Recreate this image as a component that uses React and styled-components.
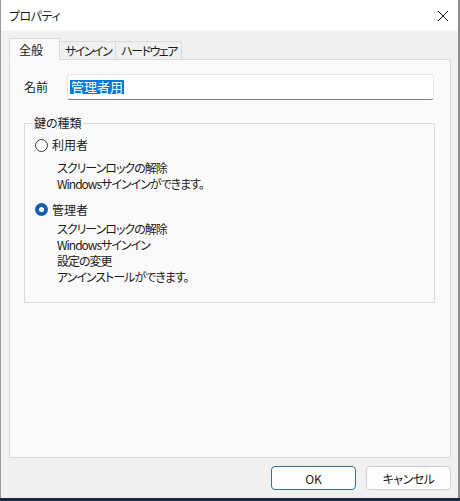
import styled, { createGlobalStyle } from 'styled-components'

const GlobalStyle = createGlobalStyle`
  body {
    margin: 0;
    background: #1d2b40;
    font-family: "Noto Sans CJK JP", "Noto Sans", sans-serif;
    font-size: 12px;
    color: #1a1a1a;
    font-feature-settings: "palt";
  }
`

const Window = styled.div`
  width: 460px;
  height: 498px;
  box-sizing: border-box;
  background: #f0f0f0;
  border-left: 1px solid #9a9a9a;
  border-right: 2px solid #8c8c8c;
  display: flex;
  flex-direction: column;
`

const TitleBar = styled.div`
  height: 31px;
  flex: none;
  background: #fff;
  display: flex;
  align-items: center;
  justify-content: space-between;
  padding: 0 9px 0 8px;
`

const Title = styled.span`
  font-size: 12px;
  line-height: 16px;
  letter-spacing: -0.5px;
`

const CloseBtn = styled.div`
  width: 12px;
  height: 12px;
  display: flex;
`

const Body = styled.div`
  flex: 1;
  display: flex;
  flex-direction: column;
  padding: 8px 7px 0 8px;
`

const TabStrip = styled.div`
  display: flex;
  align-items: flex-end;
  height: 21px;
  position: relative;
  z-index: 1;
  margin-bottom: -1px;
`

const Tab = styled.div`
  box-sizing: border-box;
  height: ${p => (p.$active ? '22px' : '19px')};
  padding: 0 ${p => (p.$active ? '9px' : '4px')} 0 ${p => (p.$active ? '9px' : '5px')};
  min-width: ${p => (p.$active ? '51px' : '0')};
  display: flex;
  align-items: ${p => (p.$active ? 'flex-start' : 'center')};
  padding-top: ${p => (p.$active ? '3px' : '0')};
  line-height: 16px;
  letter-spacing: ${p => (p.$active ? '0' : '-1.5px')};
  background: ${p => (p.$active ? '#f9f9f9' : '#f0f0f0')};
  border: 1px solid #d9d9d9;
  border-bottom: ${p => (p.$active ? '1px solid #f9f9f9' : '1px solid #d9d9d9')};
  & + & {
    border-left: none;
  }
`

const Panel = styled.div`
  box-sizing: border-box;
  height: 399px;
  background: #f9f9f9;
  border: 1px solid #d9d9d9;
  padding: 14px 14px 0 14px;
`

const NameRow = styled.div`
  display: flex;
  align-items: center;
`

const Label = styled.span`
  width: 43px;
  line-height: 16px;
`

const TextBox = styled.div`
  box-sizing: border-box;
  width: 367px;
  height: 26px;
  background: #fff;
  border: 1px solid #e5e5e5;
  border-bottom: 1px solid #7a7a7a;
  border-radius: 3px;
  display: flex;
  align-items: center;
  padding-left: 2px;
`

const Selected = styled.span`
  background: #0078d7;
  color: #fff;
  font-size: 13px;
  line-height: 14px;
  padding: 0 1px;
`

const Group = styled.fieldset`
  margin: 15px 0 0 0;
  width: 411px;
  box-sizing: border-box;
  border: 1px solid #dcdcdc;
  padding: 0 10px 16px 10px;
`

const Legend = styled.legend`
  padding: 0 1px;
  margin-left: -2px;
  line-height: 16px;
`

const RadioRow = styled.label`
  display: flex;
  align-items: center;
  gap: 4px;
  line-height: 16px;
  margin-top: ${p => p.$top}px;
`

const RadioDot = styled.span`
  box-sizing: border-box;
  width: 13px;
  height: 13px;
  border-radius: 50%;
  border: ${p => (p.$checked ? '4px solid #1560a8' : '1px solid #3c3c3c')};
  background: #fff;
`

const Desc = styled.div`
  padding-left: 22px;
  line-height: 16.3px;
  letter-spacing: -1px;
  margin-top: ${p => p.$top}px;
`

const Footer = styled.div`
  display: flex;
  justify-content: flex-end;
  gap: 10px;
  padding: 8px 0 0 0;
`

const Button = styled.button`
  width: 85px;
  height: 24px;
  box-sizing: border-box;
  font-family: inherit;
  font-feature-settings: "palt";
  font-size: 12px;
  letter-spacing: ${p => (p.$primary ? '0' : '-0.5px')};
  color: #1a1a1a;
  background: #fdfdfd;
  border: 1px solid ${p => (p.$primary ? '#3a6f8e' : '#d0d0d0')};
  border-radius: 4px;
  padding: 0;
`

export default function App() {
  return (
    <>
      <GlobalStyle />
      <Window>
        <TitleBar>
          <Title>プロパティ</Title>
          <CloseBtn>
            <svg width="12" height="12" viewBox="0 0 12 12">
              <path d="M1 1L11 11M11 1L1 11" stroke="#1a1a1a" strokeWidth="1" />
            </svg>
          </CloseBtn>
        </TitleBar>
        <Body>
          <TabStrip>
            <Tab $active>全般</Tab>
            <Tab>サインイン</Tab>
            <Tab>ハードウェア</Tab>
          </TabStrip>
          <Panel>
            <NameRow>
              <Label>名前</Label>
              <TextBox>
                <Selected>管理者用</Selected>
              </TextBox>
            </NameRow>
            <Group>
              <Legend>鍵の種類</Legend>
              <RadioRow $top={6}>
                <RadioDot />
                利用者
              </RadioRow>
              <Desc $top={7}>
                スクリーンロックの解除
                <br />
                Windowsサインインができます。
              </Desc>
              <RadioRow $top={9}>
                <RadioDot $checked />
                管理者
              </RadioRow>
              <Desc $top={3}>
                スクリーンロックの解除
                <br />
                Windowsサインイン
                <br />
                設定の変更
                <br />
                アンインストールができます。
              </Desc>
            </Group>
          </Panel>
          <Footer>
            <Button $primary>OK</Button>
            <Button>キャンセル</Button>
          </Footer>
        </Body>
      </Window>
    </>
  )
}
